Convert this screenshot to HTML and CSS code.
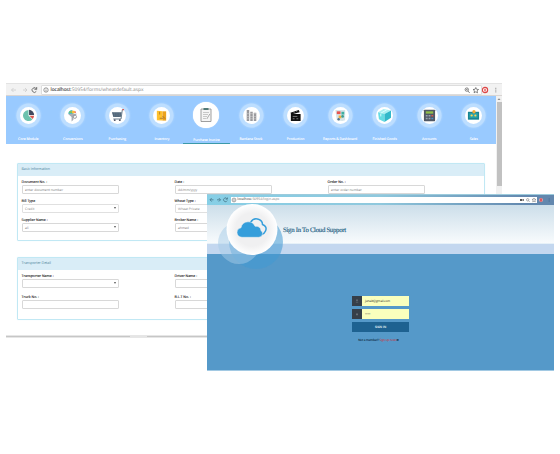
FILE: index.html
```
<!DOCTYPE html>
<html lang="en">
<head>
<meta charset="utf-8">
<title>Cloud Support</title>
<link rel="stylesheet" href="styles.css">
</head>
<body>
<section class="window erp">
  <div class="toolbar">
    <svg class="nav-icons" viewBox="0 0 34 12"><g fill="none" stroke-width=".8"><path stroke="#ccc" d="M10 6H5.500M7.500 4l-2 2 2 2M17 6h4M19 4l2 2-2 2"/><path stroke="#555" d="M30.500 5.200A2.300 2.300 0 1 0 30.300 7.300M30.700 3v2.300h-2.300"/></g></svg>
    <div class="address"><svg class="info" viewBox="0 0 6 6"><circle cx="3" cy="3" r="2.200" fill="none" stroke="#555" stroke-width=".6"/><path d="M3 1.700v.5M3 2.700v1.700" stroke="#555" stroke-width=".6"/></svg><span class="url"><b>localhost</b>:50954/forms/wheatdefault.aspx</span>
      <svg class="tools" viewBox="0 0 18 8"><g fill="none" stroke="#555" stroke-width=".7"><circle cx="3.800" cy="3.600" r="1.700"/><path d="M5 5l1.700 2M3 3.600h1.600M12.800 1.500l.8 1.800 2 .2-1.500 1.300.4 2-1.700-1-1.700 1 .4-2-1.500-1.300 2-.2z"/></g></svg></div>
    <svg class="ext" viewBox="0 0 20 10"><circle cx="3" cy="5" r="2.600" fill="#fff" stroke="#dd4545" stroke-width="1.200"/><path d="M3 3.700v2.700" stroke="#dd4545" stroke-width="1.300"/><path d="M13.800 2.800v1M13.800 4.600v1M13.800 6.400v1" stroke="#888" stroke-width="1"/></svg>
  </div>
  <div class="viewport">
    <main>
      <nav class="modules">
        <a><i><svg viewBox="0 0 14 14"><path d="M7 7V1A6 6 0 1 0 11.300 11.300z" fill="#6cc2ae"/><path d="M7.600 6.500V.9a5.600 5.600 0 0 1 5.500 5.600z" fill="#42495e"/><path d="M8 7.300h5a6 6 0 0 1-1.500 3.500z" fill="#dc554e"/></svg></i><span>Core Module</span></a>
        <a><i><svg viewBox="0 0 14 14"><path d="M2.500 5q0-3.500 4-4l2 3-2 3z" fill="#38bdd0"/><path d="M3 4l2-2.500 2 3z" fill="#8bc34a"/><path d="M6 2h3l1 2-3 1z" fill="#ffbd36"/><path d="M8.500 3l2-.5.300 2z" fill="#ed5a55"/><path d="M2 5h10L8 8.500v3l-2 2V8.500z" fill="#a8adb5"/><circle cx="9.500" cy="8.300" r="1.800" fill="none" stroke="#999"/></svg></i><span>Conversions</span></a>
        <a><i><svg viewBox="0 0 14 14"><path d="M1 3.500h10.500L10.500 8.600H2.500z" fill="#4b6073"/><path d="M3.500 3.500v5M5.500 3.500v5M7.500 3.500v5M9.500 3.500v5" stroke="#91a2ae" stroke-width=".4"/><path d="M14 .3l-1.800.5L10.800 10.800H2.500" fill="none" stroke="#5d7484" stroke-width="1"/><path d="M12.300.5h2" stroke="#df5754" stroke-width="1.500"/><circle cx="4" cy="12" r="1" fill="#556"/><circle cx="9.500" cy="12" r="1" fill="#556"/></svg></i><span>Purchasing</span></a>
        <a><i><svg viewBox="0 0 14 14"><path d="M2 2l6 .5v10L2 12z" fill="#ffc12d"/><path d="M8 2.500h4v10H8z" fill="#eba21e"/><path d="M5 3v3M8 7.500l3 3M5 10h4" stroke="#8c622e" stroke-width=".7"/></svg></i><span>Inventory</span></a>
        <a class="active"><i><svg viewBox="0 0 18 18"><path d="M4 3h10v12.500H4z" fill="#f5f5f5" stroke="#888" stroke-width=".8"/><path d="M6.500 2.200h5v1.600h-5z" fill="#33645f"/><path d="M6 6.500h6M6 8.500h5M6 10.500h4M6 12.500h3" stroke="#aaa" stroke-width=".6"/><path d="M12.800 8l-3 5" stroke="#999" stroke-width=".8"/></svg></i><span>Purchase Invoice</span></a>
        <a><i><svg viewBox="0 0 14 14"><path d="M3.200 1v12M7 3v10M10.800 4v9" stroke="#98989c" stroke-width="2.700"/><path d="M1 5h12M1 8h12M1 10.500h12" stroke="#ddd" stroke-width=".5"/></svg></i><span>Bardana Stock</span></a>
        <a><i><svg viewBox="0 0 14 14"><path d="M2 5.500h10.500v7.500H2zM1.500 4l9-3 1 2.500-9 2.500z" fill="#111"/><path d="M4 8h5M4 10.500h2M8 10.500h2M5 3.300l1 1M8 2.500l1 1" stroke="#ccc" stroke-width=".6"/></svg></i><span>Production</span></a>
        <a><i><svg viewBox="0 0 14 14"><path d="M1.500 1h10.500V12l-3 1-6-1z" fill="#d5e4e8"/><path d="M3 2.500h4v3H3z" fill="#e8544e"/><path d="M8 3h3v3H8z" fill="#3eafa0"/><path d="M5 7h3v3H5z" fill="#f2b03d"/><circle cx="9.300" cy="8" r="1.500" fill="#3f9f93"/><circle cx="5" cy="11" r="1.300" fill="#54748c"/></svg></i><span>Reports &amp; Dashboard</span></a>
        <a><i><svg viewBox="0 0 14 14"><path d="M0 3.500l6-3.500 8 1.500-7 4z" fill="#aaf0f2"/><path d="M0 3.500l7 2v8.500L1 11z" fill="#65dce3"/><path d="M7 5.500l7-4v8l-7 4.500z" fill="#32b9ca"/><path d="M3 4.500l7-4M3 5v3" stroke="#e0ffff"/></svg></i><span>Finished Goods</span></a>
        <a><i><svg viewBox="0 0 14 14"><rect x="1" y=".8" width="12" height="12.400" rx=".5" fill="#505866"/><path d="M3 2.500h8V5H3z" fill="#91be4a"/><g fill="#98a4ae"><path d="M3 6.500h2V8H3zM6 6.500h2V8H6zM3 9.500h2V11H3zM6 9.500h2V11H6z"/></g><path d="M9 6.500h2V8H9z" fill="#de584e"/><path d="M9 9.500h2V11H9z" fill="#4e8fc4"/></svg></i><span>Accounts</span></a>
        <a><i><svg viewBox="0 0 14 14"><path d="M1 3h12v8.500H1z" fill="#188494"/><path d="M2.500 4.500h9v5h-9z" fill="#2ba4a9"/><circle cx="7.500" cy="3" r="1.800" fill="#f5a833"/><circle cx="5" cy="7" r="1.200" fill="#ffd150"/><circle cx="9" cy="7" r="1.200" fill="#ffd150"/></svg></i><span>Sales</span></a>
      </nav>
      <section class="panel basic">
        <h2>Basic Information</h2>
        <div class="fields">
          <label>Document No. :<span class="control">enter document number</span></label>
          <label>Date :<span class="control">dd/mm/yyyy</span></label>
          <label>Order No. :<span class="control">enter order number</span></label>
          <label>Bill Type<span class="control select muted">Credit</span></label>
          <label>Wheat Type :<span class="control select muted">Wheat Private</span></label><b></b>
          <label>Supplier Name :<span class="control select">ali</span></label>
          <label>Broker Name :<span class="control select">ahmed</span></label>
        </div>
      </section>
      <section class="panel transport">
        <h2>Transporter Detail</h2>
        <div class="fields">
          <label>Transporter Name :<span class="control select"></span></label>
          <label>Driver Name :<span class="control"></span></label><b></b>
          <label>Truck No. :<span class="control"></span></label>
          <label>B.L.T No. :<span class="control"></span></label>
        </div>
      </section>
    </main>
    <div class="scrollbar"><svg viewBox="0 0 6 6"><path d="M1.500 4L3 2.300 4.500 4z" fill="#888"/></svg><div class="thumb"></div></div>
  </div>
  <div class="bottom-edge"></div>
</section>

<section class="window login">
  <div class="toolbar">
    <svg class="nav-icons" viewBox="0 0 24 10"><g fill="none" stroke="#48788c" stroke-width=".8"><path d="M6.500 4.800H3M4.700 3L3 4.800l1.700 1.800M10 4.800h3.500M11.800 3l1.700 1.800-1.700 1.800M20.200 4a1.900 1.900 0 1 0 0 1.600M20.400 2.500v1.700h-1.700"/></g></svg>
    <div class="address"><svg class="info" viewBox="0 0 6 6"><circle cx="3" cy="3" r="1.900" fill="none" stroke="#666" stroke-width=".6"/><path d="M3 2v2.200" stroke="#666" stroke-width=".6"/></svg><span class="url"><b>localhost</b>:50954/login.aspx</span>
      <svg class="tools" viewBox="0 0 18 6"><path d="M1 2h2.500v2H1zM4 2.500l1-.5v2l-1-.5z" fill="#555"/><circle cx="8.700" cy="2.800" r="1.200" fill="none" stroke="#777" stroke-width=".6"/><path d="M9.600 3.800l1 1" stroke="#777" stroke-width=".6"/><path d="M15 1l.6 1.300 1.400.1-1.100 1 .4 1.400-1.300-.7-1.300.7.400-1.400-1.100-1 1.400-.1z" fill="none" stroke="#777" stroke-width=".6"/></svg></div>
    <svg class="ext" viewBox="0 0 17 10"><circle cx="4" cy="5" r="2" fill="#ef9c9e"/><path d="M4 3.500v3" stroke="#d23b46" stroke-width="1.400"/><path d="M12.200 3v4" stroke="#4b6e96" stroke-width=".7"/></svg>
  </div>
  <header><h1>Sign In To Cloud Support</h1></header>
  <div class="band"></div>
  <form>
    <div class="entry"><svg viewBox="0 0 10 10"><circle cx="5" cy="4.200" r=".9" fill="#666e76"/><path d="M3.800 6.200h2.400" stroke="#666e76" stroke-width=".7"/></svg><span>junaid@gmail.com</span></div>
    <div class="entry"><svg viewBox="0 0 10 10"><path d="M4 4.500h2v1.800H4z" fill="#666e76"/></svg><span>•••••</span></div>
    <div class="submit">SIGN IN</div>
    <p>Not a member? <em>Sign up now</em> <b>➔</b></p>
  </form>
  <svg class="cloud-logo" viewBox="0 0 80 80">
    <defs><radialGradient id="disc"><stop offset=".65" stop-color="#f0f0f1"/><stop offset="1" stop-color="#fff"/></radialGradient></defs>
    <circle cx="49" cy="48" r="27" fill="#4199d1" opacity=".55"/><circle cx="32" cy="49" r="21" fill="#a5cbe8" opacity=".5"/>
    <circle cx="45" cy="35.500" r="25.500" fill="url(#disc)"/>
    <path d="M43.500 28.500q3-5 8-3.200 4 1.300 4 5.200 5 2 3 6.500-1 2.700-4 3.500" fill="none" stroke="#359edb" stroke-width="1.500"/>
    <path d="M35 43.300q-5-.5-5-5 0-4 4-4.500 1-5.700 7-6 5-.2 7 4.500 5.500-.5 6 4.500 2 1 1.500 3.300-.5 3.200-4 3.200z" fill="#359edb" stroke="#f0f0f1" stroke-width=".5"/>
  </svg>
</section>
</body>
</html>
```
FILE: styles.css
```
* { box-sizing: border-box; }
body { margin: 0; width: 560px; height: 454px; position: relative; overflow: hidden; background: #fff; font-family: "Open Sans", sans-serif; text-rendering: geometricPrecision; }
h1, h2, p { margin: 0; font-weight: normal; }
svg { display: block; flex: none; }
.window { position: absolute; display: flex; flex-direction: column; overflow: hidden; }
.toolbar { display: flex; align-items: center; flex: none; }
.address { flex: 1; display: flex; align-items: center; background: #fff; white-space: nowrap; }
.info { width: 6px; height: 6px; }
.url { flex: 1; color: #888; }
.url b { color: #333; font-weight: normal; }

.erp { left: 6px; top: 83px; width: 496px; height: 255px; }
.erp .toolbar { height: 13px; background: #f2f2f2; border-top: 1px solid #e3e3e3; border-bottom: 1px solid #d9d5d3; }
.erp .nav-icons { width: 34px; height: 12px; }
.erp .address { margin-left: 1px; height: 10px; border: 1px solid #ddd; border-radius: 1px; padding-left: 1px; }
.erp .url { font-size: 4.800px; margin-left: 1.500px; }
.erp .url b { -webkit-text-stroke: .1px #333; }
.erp .tools { width: 18px; height: 8px; }
.erp .ext { width: 20px; height: 10px; margin-left: 0; }
.viewport { display: flex; height: 239px; }
main { width: 490px; }
.scrollbar { width: 6px; background: #f1f1f1; }
.scrollbar svg { width: 6px; height: 6px; }
.thumb { height: 84px; margin: 0 .5px; background: #c1c1c1; }
.bottom-edge { flex: none; height: 3px; background: linear-gradient(90deg, #c6c6c6 0 25%, #e5e5e5 25% 28.500%, #c6c6c6 28.500%); border: solid #e6e6e6; border-width: 1px 0; }

.modules { display: grid; grid-template-columns: repeat(11, 44.560px); height: 48px; background: #99caff; }
.modules a { display: flex; flex-direction: column; align-items: center; padding-top: 10.500px; white-space: nowrap; }
.modules i { display: flex; align-items: center; justify-content: center; width: 17px; height: 17px; border-radius: 50%; background: #fff; box-shadow: 0 0 0 3.500px #bddeff, 0 0 2px 4px #b1d7ff; }
.modules i svg { width: 13px; height: 13px; }
.modules span { margin-top: 12.200px; font-size: 3.400px; line-height: 5px; color: #fff; -webkit-text-stroke: .1px #fff; }
.modules .active { margin: 0 -1.200px; padding-top: 6px; border-bottom: 1.500px solid #4099aa; }
.modules .active { border-bottom: 0; background: linear-gradient(#3b9aa9, #3b9aa9) bottom / 100% 1.400px no-repeat; }
.modules .active i { width: 26px; height: 26px; flex: none; box-shadow: 0 0 1px #fff; }
.modules .active i svg { width: 18px; height: 18px; }
.modules .active span { margin-top: 9px; }

.panel { width: 468px; margin-left: 11.300px; border: 1px solid #c1e8f4; border-radius: 1px; box-shadow: 0 0 1px #d4eff7; }
.panel h2 { height: 12px; padding-left: 3.300px; font-size: 3.700px; letter-spacing: -.12px; line-height: 12px; color: #52869c; background: #d9edf7; }
.basic { height: 78px; margin-top: 19.300px; }
.transport { height: 63px; margin-top: 15.500px; }
.fields { display: grid; grid-template-columns: repeat(3, 153px); grid-auto-rows: 19px; padding: 3.500px 0 0 3.300px; }
.transport .fields { grid-auto-rows: 20.500px; padding-top: 4.300px; }
.fields label { display: flex; flex-direction: column; font-size: 3.500px; line-height: 5px; color: #222; -webkit-text-stroke: .1px #222; }
.control { display: block; position: relative; width: 97px; height: 9px; padding-left: 2.500px; border: 1px solid #d8d8d8; border-radius: 1px; font-size: 3.300px; line-height: 7px; color: #777; background: #fff; -webkit-text-stroke: 0; }
.control.muted { border-color: #e0e0e0; color: #888; }
.select::after { content: ""; position: absolute; right: 2px; top: 2.300px; border: 1.300px solid transparent; border-top: 2px solid #555; }

.login { left: 207px; top: 194px; width: 347px; height: 177px; }
.login .toolbar { height: 10.500px; background: linear-gradient(90deg, #87cfe6, #8fc8dd 50%, #6287ae 92%); border-top: 1px solid #9ccbdc; }
.login .nav-icons { width: 24px; height: 10px; }
.login .address { height: 6.500px; }
.login .url { font-size: 3.500px; margin-left: .300px; letter-spacing: -.050px; }
.login .tools { width: 18px; height: 6px; }
.login .ext { width: 17px; height: 10px; }
header { height: 39.500px; padding-left: 76px; background: linear-gradient(#ccdeea, #f8fbfd); border-bottom: 1px solid #e6f1f8; }
h1 { font: 6.800px/51px "Liberation Serif", serif; letter-spacing: -.300px; color: #225e84; -webkit-text-stroke: .15px #225e84; }
.band { height: 10px; background: #c3d7ef; }
form { flex: 1; display: flex; flex-direction: column; padding: 41.500px 0 0 145px; background: #5599c9; border-bottom: 1px solid #a2c9e3; }
.entry { display: flex; width: 57px; height: 10px; margin-bottom: 3.300px; background: #faffbd; }
.entry svg { width: 10px; height: 10px; background: #363f49; }
.entry span { padding-left: 3px; font-size: 3.100px; letter-spacing: -.100px; line-height: 10px; color: #222; }
.submit { width: 57px; height: 10px; font-size: 3.100px; letter-spacing: -.100px; line-height: 10px; font-weight: 700; text-align: center; color: #dbe8ef; background: #1e6291; }
form p { width: 53px; margin-top: 4.500px; text-align: center; font-size: 3.100px; letter-spacing: -.130px; line-height: 6px; color: #102c42; -webkit-text-stroke: .08px; white-space: nowrap; }
form em { color: #b84a5c; font-style: normal; }
.cloud-logo { position: absolute; left: 0; top: 0; width: 80px; height: 80px; }
```
